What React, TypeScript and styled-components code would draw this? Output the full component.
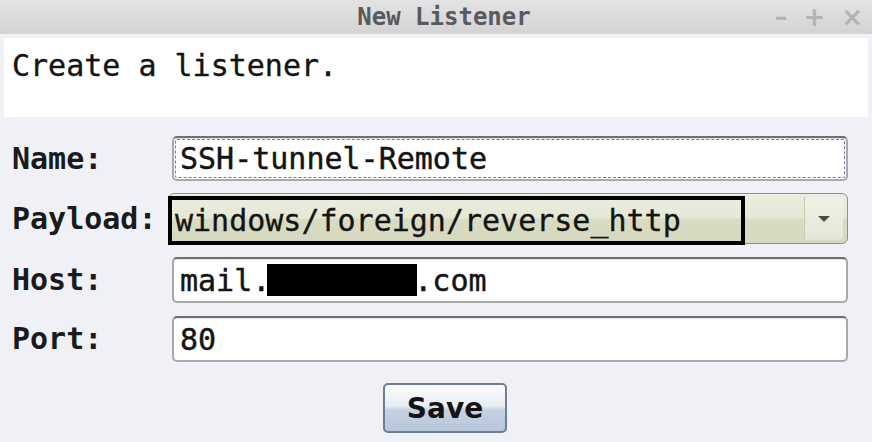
import React from "react";
import styled, { createGlobalStyle } from "styled-components";

const Global = createGlobalStyle`
  html, body { margin: 0; padding: 0; }
  body {
    background: #eff1f6;
    font-family: "DejaVu Sans Mono", "Liberation Mono", monospace;
    color: #141414;
  }
`;

const Window = styled.div`
  width: 872px;
  height: 442px;
  display: flex;
  flex-direction: column;
  background: #eff1f6;
  overflow: hidden;
`;

const TitleBar = styled.div`
  height: 35px;
  display: grid;
  grid-template-columns: 1fr auto 1fr;
  align-items: center;
  background: linear-gradient(#e3e3e3, #d3d3d3);
  border-bottom: 1px solid #f4f4f4;
  box-sizing: border-box;
`;

const Title = styled.div`
  grid-column: 2;
  padding-left: 16px;
  font-size: 24px;
  font-weight: bold;
  color: #585a5e;
`;

const Controls = styled.div`
  grid-column: 3;
  justify-self: end;
  display: flex;
  align-items: center;
  gap: 16px;
  padding-right: 9px;
  font-family: "DejaVu Sans", sans-serif;
  font-size: 26px;
  font-weight: bold;
  line-height: 1;
  color: #b3b3b3;
`;

const Description = styled.div`
  margin: 3px 4px 0;
  height: 79px;
  background: #ffffff;
  padding: 10px 8px;
  box-sizing: border-box;
  font-size: 30px;
  line-height: 36px;
  -webkit-text-stroke: 0.35px #141414;
`;

const Form = styled.div`
  margin-top: 19px;
  display: grid;
  grid-template-columns: 156px 1fr;
  row-gap: 13px;
  padding: 0 24px 0 12px;
  align-items: center;
`;

const Label = styled.div`
  font-size: 30px;
  font-weight: bold;
  line-height: 36px;
  color: #1a1a1c;
`;

const Field = styled.div<{ $h: number; $focus?: boolean }>`
  height: ${(p) => p.$h}px;
  margin-left: 4px;
  box-sizing: border-box;
  background: #ffffff;
  border: 2px solid #a9a9a9;
  border-top-color: #6f6f6f;
  border-radius: 5px;
  box-shadow: inset 0 1px 1px rgba(0, 0, 0, 0.12);
  display: flex;
  align-items: center;
  padding-left: 6px;
  font-size: 30px;
  color: #141414;
  -webkit-text-stroke: 0.45px #141414;
  white-space: nowrap;
  ${(p) =>
    p.$focus
      ? `outline: 1px dashed #6f7c98; outline-offset: -4px;`
      : ""}
`;

const Redacted = styled.span`
  display: inline-block;
  width: 150px;
  height: 32px;
  background: #000;
  vertical-align: middle;
  margin: 0 -3px 0 -3px;
`;

const Combo = styled.div`
  height: 51px;
  box-sizing: border-box;
  display: flex;
  border: 1px solid #8e9280;
  border-radius: 6px;
  background: linear-gradient(#eceddf 0%, #e6e8d6 48%, #d9dcc3 52%, #d6d9bf 100%);
  margin-top: -1px;
`;

const ComboValue = styled.div`
  width: 577px;
  box-sizing: border-box;
  margin: 2px 0 -2px -1px;
  border: 4px solid #000;
  display: flex;
  align-items: center;
  padding-left: 3px;
  font-size: 30px;
  color: #141414;
  -webkit-text-stroke: 0.35px #141414;
  white-space: nowrap;
`;

const ArrowBox = styled.div`
  margin: 3px 4px 3px auto;
  width: 38px;
  border-left: 1px solid #c9ccb4;
  border-radius: 0 4px 4px 0;
  background: linear-gradient(#f0f1e6, #e4e6d5);
  display: flex;
  align-items: center;
  justify-content: center;
`;

const Actions = styled.div`
  margin-top: 21px;
  display: flex;
  justify-content: center;
  padding-left: 18px;
`;

const SaveButton = styled.button`
  width: 124px;
  height: 50px;
  box-sizing: border-box;
  border: 2px solid #6e7e95;
  border-radius: 5px;
  background: linear-gradient(#fbfcfd 0%, #e9eef4 45%, #c4d2e2 55%, #b7c7da 100%);
  font-family: "DejaVu Sans", sans-serif;
  font-size: 28px;
  font-weight: bold;
  color: #141414;
  padding: 0;
`;

export default function App() {
  return (
    <>
      <Global />
      <Window>
        <TitleBar>
          <Title>New Listener</Title>
          <Controls>
            <span>–</span>
            <span>+</span>
            <span>×</span>
          </Controls>
        </TitleBar>
        <Description>Create a listener.</Description>
        <Form>
          <Label>Name:</Label>
          <Field $h={45} $focus>SSH-tunnel-Remote</Field>
          <Label>Payload:</Label>
          <Combo>
            <ComboValue>windows/foreign/reverse_http</ComboValue>
            <ArrowBox>
              <svg width="12" height="8" viewBox="0 0 12 8">
                <path d="M0 1 H12 L6 7 Z" fill="#4a4a4a" />
              </svg>
            </ArrowBox>
          </Combo>
          <Label>Host:</Label>
          <Field $h={46}>
            mail.<Redacted />.com
          </Field>
          <Label>Port:</Label>
          <Field $h={46}>80</Field>
        </Form>
        <Actions>
          <SaveButton>Save</SaveButton>
        </Actions>
      </Window>
    </>
  );
}
